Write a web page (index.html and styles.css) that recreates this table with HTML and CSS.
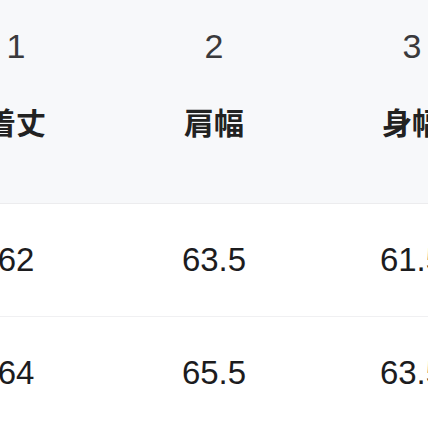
FILE: index.html
```html
<!DOCTYPE html>
<html lang="ja">
<head>
<meta charset="utf-8">
<link rel="stylesheet" href="styles.css">
</head>
<body>
<div class="viewport">
  <table class="size-table">
    <thead>
      <tr>
        <th><div class="head"><span class="num">1</span><span class="label">着丈</span></div></th>
        <th><div class="head"><span class="num">2</span><span class="label">肩幅</span></div></th>
        <th><div class="head"><span class="num">3</span><span class="label">身幅</span></div></th>
      </tr>
    </thead>
    <tbody>
      <tr><td>62</td><td>63.5</td><td>61.5</td></tr>
      <tr><td>64</td><td>65.5</td><td>63.5</td></tr>
    </tbody>
  </table>
</div>
</body>
</html>
```
FILE: styles.css
```css
html, body {
  margin: 0;
  padding: 0;
  background: #ffffff;
}
.viewport {
  width: 428px;
  height: 428px;
  overflow: hidden;
}
.size-table {
  border-collapse: collapse;
  table-layout: fixed;
  width: 594px;
  margin-left: -83px;
}
.size-table th,
.size-table td {
  width: 198px;
  padding: 0;
  text-align: center;
}
.size-table th {
  background: #f7f8fa;
  height: 203px;
  vertical-align: top;
  border-bottom: 1px solid #ececee;
}
.head {
  display: flex;
  flex-direction: column;
  align-items: center;
  padding-top: 26px;
}
.num {
  font-family: "Liberation Sans", Arial, sans-serif;
  font-weight: normal;
  font-size: 34px;
  line-height: 40px;
  height: 40px;
  color: #3a3a3c;
}
.label {
  margin-top: 35px;
  font-family: "Noto Sans CJK JP", sans-serif;
  font-weight: bold;
  font-size: 30px;
  line-height: 40px;
  color: #222222;
}
.size-table td {
  height: 112px;
  vertical-align: middle;
  font-family: "Liberation Sans", Arial, sans-serif;
  font-size: 33px;
  line-height: 40px;
  color: #1c1c1e;
  border-bottom: 1px solid #f0f0f2;
}
```
